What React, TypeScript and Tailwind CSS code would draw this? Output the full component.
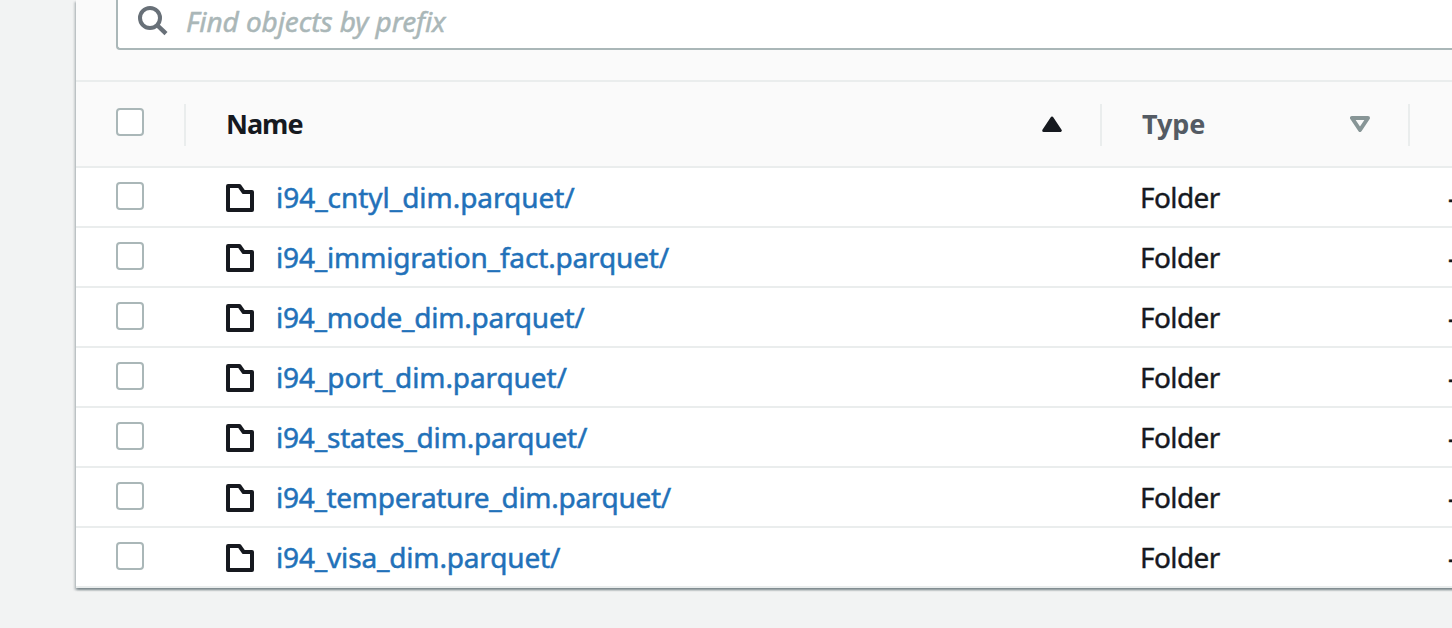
import React from "react";

const rows = [
  { name: "i94_cntyl_dim.parquet/", spacing: "tracking-[-0.03px]" },
  { name: "i94_immigration_fact.parquet/", spacing: "tracking-[-0.16px]" },
  { name: "i94_mode_dim.parquet/", spacing: "tracking-[-0.22px]" },
  { name: "i94_port_dim.parquet/", spacing: "tracking-[-0.1px]" },
  { name: "i94_states_dim.parquet/", spacing: "tracking-[-0.19px]" },
  { name: "i94_temperature_dim.parquet/", spacing: "tracking-[-0.29px]" },
  { name: "i94_visa_dim.parquet/", spacing: "tracking-[-0.16px]" },
];

function Checkbox() {
  return (
    <span
      role="checkbox"
      aria-checked="false"
      className="block size-7 shrink-0 rounded-[4px] border-2 border-[#aab7b8] bg-white"
    />
  );
}

function FolderIcon() {
  return (
    <svg className="size-7 shrink-0" viewBox="0 0 28 28" fill="none" stroke="#16191f" strokeWidth="4" strokeLinejoin="round">
      <path d="M2 2H13.4L17.6 8H26V26H2Z" />
    </svg>
  );
}

function Divider() {
  return <span className="mt-0.5 h-[42px] w-0.5 shrink-0 bg-[#eaeded]" />;
}

export default function App() {
  return (
    <div className="h-[628px] w-full overflow-hidden bg-[#f2f3f3] pl-[76px] font-['Noto_Sans',sans-serif] text-[28px] text-[#16191f]">
      <main className="w-[1500px] bg-white shadow-[0_2px_2px_0_rgba(0,28,36,0.3),2px_2px_2px_0_rgba(0,28,36,0.15),-2px_2px_2px_0_rgba(0,28,36,0.15)]">
        <div className="h-[82px] border-b-2 border-[#eaeded] bg-[#fafafa] pl-10">
          <div className="flex h-[50px] items-start rounded-bl-[4px] border-b-2 border-l-2 border-[#aab7b8] bg-white pl-5">
            <svg className="mt-[6px] size-[30px] shrink-0" viewBox="0 0 30 30" fill="none" stroke="#687078" strokeWidth="4">
              <circle cx="12" cy="12" r="10" />
              <path d="M18.5 18.5L28 27.6" strokeWidth="4.4" />
            </svg>
            <span className="ml-[18px] mt-px whitespace-nowrap leading-[40px] tracking-[-0.08px] text-[#aab7b8] italic [-webkit-text-stroke:0.5px_#aab7b8]">
              Find objects by prefix
            </span>
          </div>
        </div>

        <div className="flex h-[86px] items-center border-b-2 border-[#eaeded] bg-[#fafafa] pl-10 font-bold">
          <div className="flex w-[68px] shrink-0 pb-1">
            <Checkbox />
          </div>
          <Divider />
          <div className="flex w-[914px] shrink-0 items-center justify-between pr-[38px] pl-10">
            <span className="text-[27px] leading-10 tracking-[-1px]">Name</span>
            <svg className="h-4 w-5" viewBox="0 0 20 16" fill="#16191f" stroke="#16191f" strokeWidth="3" strokeLinejoin="round">
              <path d="M10 2L18.3 14.5H1.7Z" />
            </svg>
          </div>
          <Divider />
          <div className="flex w-[306px] shrink-0 items-center justify-between pr-[38px] pl-10 text-[#545b64]">
            <span className="text-[27px] leading-10 tracking-[-0.1px]">Type</span>
            <svg className="h-4 w-5" viewBox="0 0 20 16" fill="#fafafa" stroke="#879596" strokeWidth="4" strokeLinejoin="round">
              <path d="M2 2H18L10 14Z" />
            </svg>
          </div>
          <Divider />
        </div>

        {rows.map((row) => (
          <div key={row.name} className="flex h-[60px] items-center border-b-2 border-[#eaeded] pl-10">
            <div className="flex w-[110px] shrink-0 pb-0.5">
              <Checkbox />
            </div>
            <div className="flex w-[914px] shrink-0 items-center">
              <span className="flex pt-0.5">
                <FolderIcon />
              </span>
              <a className={"ml-[22px] whitespace-nowrap leading-10 text-[#2271b9] [-webkit-text-stroke:0.5px_#2271b9] " + row.spacing}>
                {row.name}
              </a>
            </div>
            <span className="w-[308px] shrink-0 leading-10 tracking-[-0.6px] [-webkit-text-stroke:0.4px_#16191f]">Folder</span>
            <span className="leading-10 [-webkit-text-stroke:0.5px_#16191f]">-</span>
          </div>
        ))}
      </main>
    </div>
  );
}
